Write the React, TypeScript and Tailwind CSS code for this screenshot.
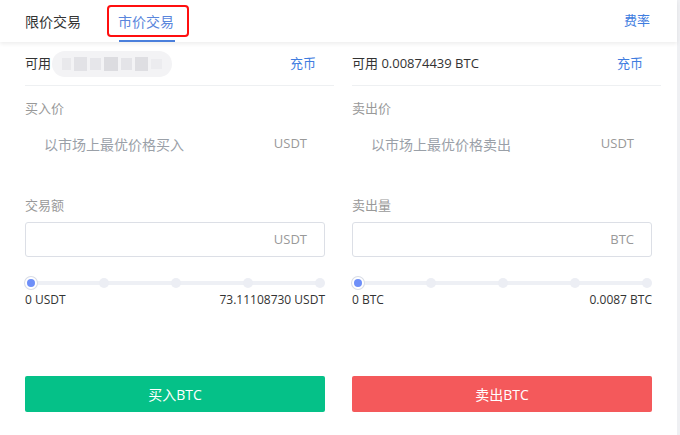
import React from "react";

const FONT = { fontFamily: '"Open Sans", "Noto Sans CJK SC", sans-serif' };

const DOTS = [0, 1, 2, 3, 4];

function Slider({ min, max }: { min: string; max: string }) {
    return (
        <div className="w-[300px] mt-[20px]">
            <div className="relative h-[12px] flex items-center">
                <div className="absolute left-[6px] right-[5px] h-[4px] bg-[#eef0f5] rounded" />
                <div className="relative w-full flex justify-between items-center">
                    {DOTS.map((i) =>
                        i === 0 ? (
                            <span
                                key={i}
                                className="w-[12px] h-[12px] rounded-full bg-[#6e8ff8] border-2 border-white ring-1 ring-[#d8dce6]"
                            />
                        ) : (
                            <span key={i} className="w-[10px] h-[10px] rounded-full bg-[#eceef4]" />
                        )
                    )}
                </div>
            </div>
            <div className="flex justify-between text-[12px] text-[#333] mt-[3px] leading-[16px]">
                <span>{min}</span>
                <span>{max}</span>
            </div>
        </div>
    );
}

function Column({
    available,
    blurred,
    priceLabel,
    placeholder,
    amountLabel,
    unit,
    min,
    max,
    button,
    buttonClass,
}: {
    available: string;
    blurred?: boolean;
    priceLabel: string;
    placeholder: string;
    amountLabel: string;
    unit: string;
    min: string;
    max: string;
    button: string;
    buttonClass: string;
}) {
    return (
        <div className="w-[309px] flex flex-col">
            {/* available balance */}
            <div className="h-[44px] flex items-center justify-between border-b border-[#eef0f2] pr-[18px]">
                <div className="flex items-center text-[13px] text-[#333]">
                    <span>{available}</span>
                    {blurred && (
                        <span className="ml-[1px] w-[120px] h-[26px] rounded-full bg-[#f3f3f5] flex items-center gap-[3px] px-[10px] overflow-hidden">
                            <span className="w-[10px] h-[12px] bg-[#e9e9ec]" />
                            <span className="w-[14px] h-[14px] bg-[#e2e2e6]" />
                            <span className="w-[12px] h-[12px] bg-[#e6e6ea]" />
                            <span className="w-[16px] h-[14px] bg-[#dcdce0]" />
                            <span className="w-[12px] h-[12px] bg-[#e4e4e8]" />
                            <span className="w-[14px] h-[14px] bg-[#dedee2]" />
                            <span className="w-[12px] h-[10px] bg-[#ececef]" />
                        </span>
                    )}
                </div>
                <span className="text-[13px] text-[#3f7ddf]">充币</span>
            </div>

            {/* price */}
            <div className="mt-[14px] text-[13px] text-[#999] leading-[16px]">{priceLabel}</div>
            <div className="w-[300px] h-[40px] mt-[8px] flex items-center justify-between pl-[19px] pr-[18px]">
                <span className="text-[14px] text-[#9aa0a8]">{placeholder}</span>
                <span className="text-[13px] text-[#999]">USDT</span>
            </div>

            {/* amount */}
            <div className="mt-[33px] text-[13px] text-[#999] leading-[16px]">{amountLabel}</div>
            <div className="w-[300px] h-[35px] mt-[9px] border border-[#dcdfe6] rounded-[3px] flex items-center justify-end pr-[17px]">
                <span className="text-[13px] text-[#999]">{unit}</span>
            </div>

            <Slider min={min} max={max} />

            <button
                className={`w-[300px] h-[36px] mt-[68px] rounded-[2px] text-white text-[14px] ${buttonClass}`}
            >
                {button}
            </button>
        </div>
    );
}

export default function App() {
    return (
        <div className="w-[680px] h-[435px] bg-[#eff0f3] overflow-hidden" style={FONT}>
            <div className="w-[677px] h-[435px] bg-white">
                {/* tabs header */}
                <header className="relative h-[42px] flex items-center justify-between px-[25px] shadow-[0_2px_4px_rgba(0,0,0,0.07)]">
                    <div className="flex items-center h-full">
                        <span className="text-[14px] text-[#333]">限价交易</span>
                        <div className="relative ml-[37px] h-full flex items-center">
                            <span className="text-[14px] text-[#5a86dc]">市价交易</span>
                            <span className="absolute left-[1px] right-[-1px] bottom-0 h-[2px] bg-[#4a7fdc]" />
                            <span className="absolute left-[-11px] right-[-15px] top-[5px] h-[32px] border-[2.5px] border-[#ff0f0f] rounded-[4px]" />
                        </div>
                    </div>
                    <span className="text-[13px] text-[#3f7ddf] mr-[2px]">费率</span>
                </header>

                <div className="flex gap-[18px] pl-[25px]">
                    <Column
                        available="可用"
                        blurred
                        priceLabel="买入价"
                        placeholder="以市场上最优价格买入"
                        amountLabel="交易额"
                        unit="USDT"
                        min="0 USDT"
                        max="73.11108730 USDT"
                        button="买入BTC"
                        buttonClass="bg-[#05c188]"
                    />
                    <Column
                        available="可用 0.00874439 BTC"
                        priceLabel="卖出价"
                        placeholder="以市场上最优价格卖出"
                        amountLabel="卖出量"
                        unit="BTC"
                        min="0 BTC"
                        max="0.0087 BTC"
                        button="卖出BTC"
                        buttonClass="bg-[#f4595b]"
                    />
                </div>
            </div>
        </div>
    );
}
